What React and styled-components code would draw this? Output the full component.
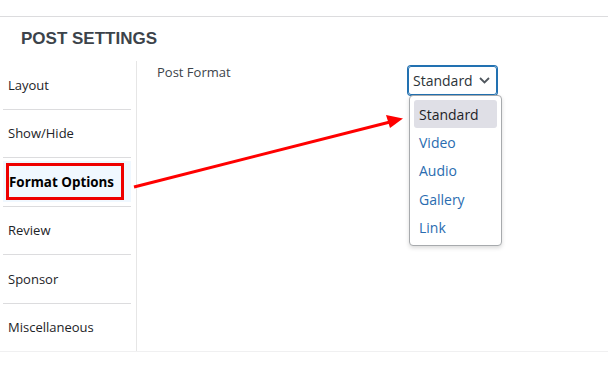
import React from 'react';
import styled, { createGlobalStyle } from 'styled-components';

const GlobalStyle = createGlobalStyle`
  body {
    margin: 0;
    background: #fff;
    font-family: "Open Sans", "Noto Sans", sans-serif;
  }
`;

const Page = styled.div`
  position: relative;
  width: 608px;
  height: 370px;
  padding-top: 16px;
  box-sizing: border-box;
  background: #fff;
`;

const Box = styled.div`
  border-top: 1px solid #dcdcde;
  border-bottom: 1px solid #f0f0f1;
`;

const Title = styled.h2`
  margin: 0;
  padding: 13px 21px 14px;
  font-family: "Liberation Sans", Arial, sans-serif;
  font-size: 17px;
  line-height: 17px;
  font-weight: 700;
  color: #3c434a;
`;

const Body = styled.div`
  display: flex;
`;

const Sidebar = styled.ul`
  list-style: none;
  margin: 0;
  padding: 0 5px 0 3px;
  width: 137px;
  box-sizing: border-box;
  border-right: 1px solid #e6e6e6;
`;

const Item = styled.li`
  height: 47.5px;
  display: flex;
  align-items: center;
  padding-left: ${p => (p.$active ? '3px' : '5px')};
  font-size: 13px;
  color: ${p => (p.$active ? '#000' : '#1d2327')};
  font-weight: ${p => (p.$active ? 700 : 400)};
  border-bottom: ${p => (p.$last ? 'none' : '1px solid #dcdcde')};
  background: ${p => (p.$active ? 'linear-gradient(#fff 0 3px, #f0f8ff 3px calc(100% - 4px), #fff calc(100% - 4px))' : 'transparent')};
`;

const Marked = styled.span`
  display: flex;
  align-items: center;
  width: 118px;
  height: 37px;
  box-sizing: border-box;
  border: 3px solid #ee0000;
  font-size: 13.4px;
`;

const Content = styled.div`
  flex: 1;
  padding: 2px 0 0 20px;
`;

const FieldRow = styled.div`
  display: grid;
  grid-template-columns: 251px auto;
  align-items: start;
`;

const Label = styled.div`
  font-size: 13px;
  line-height: 18px;
  color: #3c434a;
`;

const SelectWrap = styled.div`
  position: relative;
  margin-top: 3px;
`;

const Select = styled.div`
  display: flex;
  align-items: center;
  gap: 6px;
  width: 89px;
  height: 29px;
  box-sizing: border-box;
  padding: 0 6px 0 4px;
  border: 1px solid #2271b1;
  box-shadow: 0 0 0 1px #2271b1;
  border-radius: 3px;
  font-size: 14px;
  color: #2c3338;
`;

const Menu = styled.ul`
  position: absolute;
  top: 29px;
  left: 1px;
  width: 93px;
  margin: 0;
  padding: 4px;
  box-sizing: border-box;
  list-style: none;
  background: #fff;
  border: 1px solid #a7aaad;
  border-radius: 4px;
  box-shadow: 0 2px 4px rgba(0, 0, 0, 0.15);
`;

const Option = styled.li`
  height: 28.3px;
  display: flex;
  align-items: center;
  padding-left: 5px;
  border-radius: 3px;
  font-size: 14px;
  color: ${p => (p.$selected ? '#1d2327' : '#2a6cb0')};
  background: ${p => (p.$selected ? '#dfdfe6' : 'transparent')};
`;

const Arrow = styled.svg`
  position: absolute;
  left: 0;
  top: 0;
  pointer-events: none;
`;

const tabs = ['Layout', 'Show/Hide', 'Format Options', 'Review', 'Sponsor', 'Miscellaneous'];
const formats = ['Standard', 'Video', 'Audio', 'Gallery', 'Link'];

export default function App() {
  return (
    <Page>
      <GlobalStyle />
      <Box>
        <Title>POST SETTINGS</Title>
        <Body>
          <Sidebar>
            {tabs.map((t, i) => (
              <Item key={t} $active={i === 2} $last={i === tabs.length - 1}>
                {i === 2 ? <Marked>{t}</Marked> : t}
              </Item>
            ))}
          </Sidebar>
          <Content>
            <FieldRow>
              <Label>Post Format</Label>
              <SelectWrap>
                <Select>
                  Standard
                  <svg width="11" height="7" viewBox="0 0 11 7">
                    <path d="M1 1 L5.5 5.5 L10 1" fill="none" stroke="#50575e" strokeWidth="1.8" />
                  </svg>
                </Select>
                <Menu>
                  {formats.map((f, i) => (
                    <Option key={f} $selected={i === 0}>{f}</Option>
                  ))}
                </Menu>
              </SelectWrap>
            </FieldRow>
          </Content>
        </Body>
      </Box>
      <Arrow width="608" height="370" viewBox="0 0 608 370">
        <line x1="134" y1="187" x2="390" y2="122" stroke="#ff0000" strokeWidth="3" />
        <polygon points="403,118.5 386,115 390,128" fill="#ff0000" />
      </Arrow>
    </Page>
  );
}
